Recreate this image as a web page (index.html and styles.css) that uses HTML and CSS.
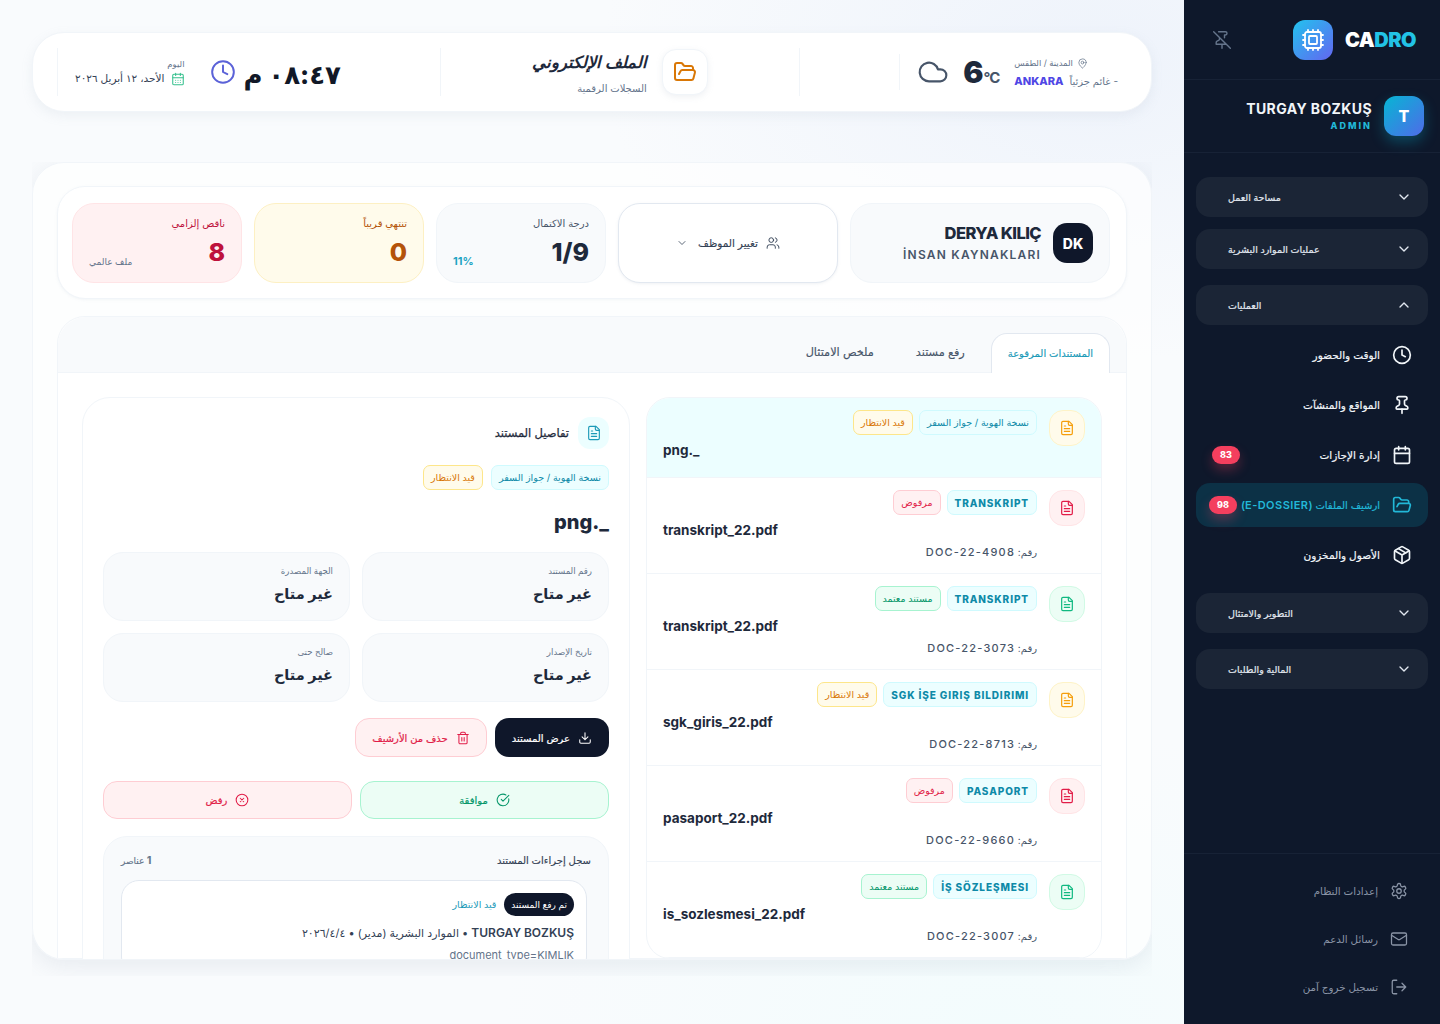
FILE: index.html
```html
<!DOCTYPE html>
<html lang="ar" dir="rtl">
<head>
  <meta charset="utf-8">
  <title>CADRO</title>
  <link rel="stylesheet" href="styles.css">
</head>
<body>
  <svg class="sprite" xmlns="http://www.w3.org/2000/svg">
    <symbol id="i-clock" viewBox="0 0 24 24"><circle cx="12" cy="12" r="10"/><path d="M12 6v6l4 2"/></symbol>
    <symbol id="i-folder" viewBox="0 0 24 24"><path d="m6 14 1.5-2.9A2 2 0 0 1 9.24 10H20a2 2 0 0 1 1.94 2.5l-1.54 6a2 2 0 0 1-1.95 1.5H4a2 2 0 0 1-2-2V5a2 2 0 0 1 2-2h3.9a2 2 0 0 1 1.69.9l.81 1.2a2 2 0 0 0 1.67.9H18a2 2 0 0 1 2 2v2"/></symbol>
    <symbol id="i-cloud" viewBox="0 0 24 24"><path d="M17.5 19H9a7 7 0 1 1 6.71-9h1.79a4.5 4.5 0 1 1 0 9Z"/></symbol>
    <symbol id="i-pinmap" viewBox="0 0 24 24"><path d="M20 10c0 6-8 12-8 12s-8-6-8-12a8 8 0 0 1 16 0Z"/><circle cx="12" cy="10" r="3"/></symbol>
    <symbol id="i-caldays" viewBox="0 0 24 24"><rect x="3" y="4" width="18" height="18" rx="2"/><path d="M16 2v4M8 2v4M3 10h18M8 14h.01M12 14h.01M16 14h.01M8 18h.01M12 18h.01M16 18h.01"/></symbol>
    <symbol id="i-cal" viewBox="0 0 24 24"><rect x="3" y="4" width="18" height="18" rx="2"/><path d="M16 2v4M8 2v4M3 10h18"/></symbol>
    <symbol id="i-pinoff" viewBox="0 0 24 24"><path d="M12 17v5M15 9.34V6h1a2 2 0 0 0 0-4H7.89M2 2l20 20M9 9v1.76a2 2 0 0 1-1.11 1.79l-1.78.9A2 2 0 0 0 5 15.24V17h12"/></symbol>
    <symbol id="i-pin" viewBox="0 0 24 24"><path d="M12 17v5"/><path d="M9 10.76a2 2 0 0 1-1.11 1.79l-1.78.9A2 2 0 0 0 5 15.24V16a1 1 0 0 0 1 1h12a1 1 0 0 0 1-1v-.76a2 2 0 0 0-1.11-1.79l-1.78-.9A2 2 0 0 1 15 10.76V7a1 1 0 0 1 1-1 2 2 0 0 0 0-4H8a2 2 0 0 0 0 4 1 1 0 0 1 1 1z"/></symbol>
    <symbol id="i-cpu" viewBox="0 0 24 24"><rect x="4" y="4" width="16" height="16" rx="2"/><rect x="8" y="8" width="8" height="8" rx="1"/><path d="M12 20v2M12 2v2M17 20v2M17 2v2M2 12h2M2 17h2M2 7h2M20 12h2M20 17h2M20 7h2M7 20v2M7 2v2"/></symbol>
    <symbol id="i-down" viewBox="0 0 24 24"><path d="m6 9 6 6 6-6"/></symbol>
    <symbol id="i-up" viewBox="0 0 24 24"><path d="m18 15-6-6-6 6"/></symbol>
    <symbol id="i-box" viewBox="0 0 24 24"><path d="m7.5 4.27 9 5.15"/><path d="M21 8a2 2 0 0 0-1-1.73l-7-4a2 2 0 0 0-2 0l-7 4A2 2 0 0 0 3 8v8a2 2 0 0 0 1 1.73l7 4a2 2 0 0 0 2 0l7-4A2 2 0 0 0 21 16Z"/><path d="m3.3 7 8.7 5 8.7-5M12 22V12"/></symbol>
    <symbol id="i-gear" viewBox="0 0 24 24"><path d="M12.22 2h-.44a2 2 0 0 0-2 2v.18a2 2 0 0 1-1 1.73l-.43.25a2 2 0 0 1-2 0l-.15-.08a2 2 0 0 0-2.73.73l-.22.38a2 2 0 0 0 .73 2.73l.15.1a2 2 0 0 1 1 1.72v.51a2 2 0 0 1-1 1.74l-.15.09a2 2 0 0 0-.73 2.73l.22.38a2 2 0 0 0 2.73.73l.15-.08a2 2 0 0 1 2 0l.43.25a2 2 0 0 1 1 1.73V20a2 2 0 0 0 2 2h.44a2 2 0 0 0 2-2v-.18a2 2 0 0 1 1-1.73l.43-.25a2 2 0 0 1 2 0l.15.08a2 2 0 0 0 2.73-.73l.22-.39a2 2 0 0 0-.73-2.73l-.15-.08a2 2 0 0 1-1-1.74v-.5a2 2 0 0 1 1-1.74l.15-.09a2 2 0 0 0 .73-2.73l-.22-.38a2 2 0 0 0-2.73-.73l-.15.08a2 2 0 0 1-2 0l-.43-.25a2 2 0 0 1-1-1.73V4a2 2 0 0 0-2-2z"/><circle cx="12" cy="12" r="3"/></symbol>
    <symbol id="i-mail" viewBox="0 0 24 24"><rect x="2" y="4" width="20" height="16" rx="2"/><path d="m22 7-8.97 5.7a1.94 1.94 0 0 1-2.06 0L2 7"/></symbol>
    <symbol id="i-logout" viewBox="0 0 24 24"><path d="M9 21H5a2 2 0 0 1-2-2V5a2 2 0 0 1 2-2h4M16 17l5-5-5-5M21 12H9"/></symbol>
    <symbol id="i-file" viewBox="0 0 24 24"><path d="M15 2H6a2 2 0 0 0-2 2v16a2 2 0 0 0 2 2h12a2 2 0 0 0 2-2V7Z"/><path d="M14 2v4a2 2 0 0 0 2 2h4M10 9H8M16 13H8M16 17H8"/></symbol>
    <symbol id="i-users" viewBox="0 0 24 24"><path d="M16 21v-2a4 4 0 0 0-4-4H6a4 4 0 0 0-4 4v2"/><circle cx="9" cy="7" r="4"/><path d="M22 21v-2a4 4 0 0 0-3-3.87M16 3.13a4 4 0 0 1 0 7.75"/></symbol>
    <symbol id="i-download" viewBox="0 0 24 24"><path d="M21 15v4a2 2 0 0 1-2 2H5a2 2 0 0 1-2-2v-4M7 10l5 5 5-5M12 15V3"/></symbol>
    <symbol id="i-trash" viewBox="0 0 24 24"><path d="M3 6h18M19 6v14c0 1-1 2-2 2H7c-1 0-2-1-2-2V6M8 6V4c0-1 1-2 2-2h4c1 0 2 1 2 2v2M10 11v6M14 11v6"/></symbol>
    <symbol id="i-check" viewBox="0 0 24 24"><path d="M21.801 10A10 10 0 1 1 17 3.335"/><path d="m9 11 3 3L22 4"/></symbol>
    <symbol id="i-cross" viewBox="0 0 24 24"><circle cx="12" cy="12" r="10"/><path d="m15 9-6 6M9 9l6 6"/></symbol>
  </svg>

  <aside class="sidebar">
    <div class="side-head">
      <div class="logo">
        <span class="logo-icon"><svg class="ic"><use href="#i-cpu"/></svg></span>
        <span class="logo-text">CA<b>DRO</b></span>
      </div>
      <svg class="ic pin-off"><use href="#i-pinoff"/></svg>
    </div>
    <div class="side-user">
      <span class="user-avatar">T</span>
      <div class="user-meta">
        <div class="user-name">TURGAY BOZKUŞ</div>
        <div class="user-role">ADMIN</div>
      </div>
    </div>

    <nav class="side-nav">
      <div class="nav-group"><span>مساحة العمل</span><svg class="ic"><use href="#i-down"/></svg></div>
      <div class="nav-group nav-group-close"><span>عمليات الموارد البشرية</span><svg class="ic"><use href="#i-down"/></svg></div>
      <div class="nav-group"><span>العمليات</span><svg class="ic"><use href="#i-up"/></svg></div>
      <div class="nav-items">
        <a class="nav-item"><svg class="ic"><use href="#i-clock"/></svg><span>الوقت والحضور</span></a>
        <a class="nav-item"><svg class="ic"><use href="#i-pin"/></svg><span>المواقع والمنشآت</span></a>
        <a class="nav-item"><svg class="ic"><use href="#i-cal"/></svg><span>إدارة الإجازات</span><em class="count">83</em></a>
        <a class="nav-item active"><svg class="ic"><use href="#i-folder"/></svg><span>ارشيف الملفات <i class="latin">(E-DOSSIER)</i></span><em class="count">98</em></a>
        <a class="nav-item"><svg class="ic"><use href="#i-box"/></svg><span>الأصول والمخزون</span></a>
      </div>
      <div class="nav-group"><span>التطوير والامتثال</span><svg class="ic"><use href="#i-down"/></svg></div>
      <div class="nav-group"><span>المالية والطلبات</span><svg class="ic"><use href="#i-down"/></svg></div>
    </nav>

    <div class="side-foot">
      <a class="foot-item"><svg class="ic"><use href="#i-gear"/></svg>إعدادات النظام</a>
      <a class="foot-item"><svg class="ic"><use href="#i-mail"/></svg>رسائل الدعم</a>
      <a class="foot-item"><svg class="ic"><use href="#i-logout"/></svg>تسجيل خروج آمن</a>
    </div>
  </aside>

  <main class="main">
    <header class="topbar">
      <div class="top-cell">
        <div class="weather">
          <div class="weather-text">
            <div class="weather-label"><svg class="ic"><use href="#i-pinmap"/></svg>المدينة / الطقس</div>
            <div class="weather-line"><span>- غائم جزئياً</span><strong>ANKARA</strong></div>
          </div>
          <div class="temp">6<small>°C</small></div>
          <svg class="ic cloud"><use href="#i-cloud"/></svg>
        </div>
      </div>
      <div class="top-cell top-center">
        <span class="folder-box"><svg class="ic"><use href="#i-folder"/></svg></span>
        <div>
          <h1 class="page-title">الملف الإلكتروني</h1>
          <p class="page-sub">السجلات الرقمية</p>
        </div>
      </div>
      <div class="top-cell top-end">
        <div class="clock">
          <div class="date">
            <div class="date-label">اليوم</div>
            <div class="date-line"><svg class="ic"><use href="#i-caldays"/></svg>الأحد، ١٢ أبريل ٢٠٢٦</div>
          </div>
          <svg class="ic clock-ic"><use href="#i-clock"/></svg>
          <div class="time">٠٨:٤٧ م</div>
        </div>
      </div>
    </header>

    <div class="panel-clip">
    <section class="panel">
      <div class="summary">
        <div class="person">
          <span class="person-avatar">DK</span>
          <div>
            <div class="person-name">DERYA KILIÇ</div>
            <div class="person-dept">İNSAN KAYNAKLARI</div>
          </div>
        </div>
        <div class="switcher">
          <svg class="ic"><use href="#i-users"/></svg>
          <span>تغيير الموظف</span>
          <svg class="ic"><use href="#i-down"/></svg>
        </div>
        <div class="stat">
          <div class="stat-label">درجة الاكتمال</div>
          <div class="stat-row"><span class="stat-num">1/9</span><span class="stat-pct">11%</span></div>
        </div>
        <div class="stat stat-warn">
          <div class="stat-label">تنتهي قريباً</div>
          <div class="stat-row"><span class="stat-num">0</span></div>
        </div>
        <div class="stat stat-bad">
          <div class="stat-label">ناقص إلزامي</div>
          <div class="stat-row"><span class="stat-num">8</span><span class="stat-note">ملف عالمي</span></div>
        </div>
      </div>

      <div class="workspace">
        <div class="tabs">
          <span class="tab active">المستندات المرفوعة</span>
          <span class="tab">رفع مستند</span>
          <span class="tab">ملخص الامتثال</span>
        </div>
        <div class="columns">
          <div class="doc-list">
            <article class="doc selected">
              <span class="doc-icon amber"><svg class="ic"><use href="#i-file"/></svg></span>
              <div class="doc-body">
                <div class="tags"><span class="tag tag-type ar">نسخة الهوية / جواز السفر</span><span class="tag tag-wait">قيد الانتظار</span></div>
                <div class="doc-name">png._</div>
              </div>
            </article>
            <article class="doc">
              <span class="doc-icon red"><svg class="ic"><use href="#i-file"/></svg></span>
              <div class="doc-body">
                <div class="tags"><span class="tag tag-type">TRANSKRIPT</span><span class="tag tag-bad">مرفوض</span></div>
                <div class="doc-name">transkript_22.pdf</div>
                <div class="doc-id">رقم: <span>DOC-22-4908</span></div>
              </div>
            </article>
            <article class="doc">
              <span class="doc-icon green"><svg class="ic"><use href="#i-file"/></svg></span>
              <div class="doc-body">
                <div class="tags"><span class="tag tag-type">TRANSKRIPT</span><span class="tag tag-ok">مستند معتمد</span></div>
                <div class="doc-name">transkript_22.pdf</div>
                <div class="doc-id">رقم: <span>DOC-22-3073</span></div>
              </div>
            </article>
            <article class="doc">
              <span class="doc-icon amber"><svg class="ic"><use href="#i-file"/></svg></span>
              <div class="doc-body">
                <div class="tags"><span class="tag tag-type">SGK İŞE GIRIŞ BILDIRIMI</span><span class="tag tag-wait">قيد الانتظار</span></div>
                <div class="doc-name">sgk_giris_22.pdf</div>
                <div class="doc-id">رقم: <span>DOC-22-8713</span></div>
              </div>
            </article>
            <article class="doc">
              <span class="doc-icon red"><svg class="ic"><use href="#i-file"/></svg></span>
              <div class="doc-body">
                <div class="tags"><span class="tag tag-type">PASAPORT</span><span class="tag tag-bad">مرفوض</span></div>
                <div class="doc-name">pasaport_22.pdf</div>
                <div class="doc-id">رقم: <span>DOC-22-9660</span></div>
              </div>
            </article>
            <article class="doc">
              <span class="doc-icon green"><svg class="ic"><use href="#i-file"/></svg></span>
              <div class="doc-body">
                <div class="tags"><span class="tag tag-type">İŞ SÖZLEŞMESI</span><span class="tag tag-ok">مستند معتمد</span></div>
                <div class="doc-name">is_sozlesmesi_22.pdf</div>
                <div class="doc-id">رقم: <span>DOC-22-3007</span></div>
              </div>
            </article>
          </div>

          <div class="details">
            <div class="details-head">
              <span class="details-icon"><svg class="ic"><use href="#i-file"/></svg></span>
              <h2>تفاصيل المستند</h2>
            </div>
            <div class="tags"><span class="tag tag-type ar">نسخة الهوية / جواز السفر</span><span class="tag tag-wait">قيد الانتظار</span></div>
            <div class="details-name">png._</div>
            <div class="facts">
              <div class="fact"><label>رقم المستند</label><strong>غير متاح</strong></div>
              <div class="fact"><label>الجهة المصدرة</label><strong>غير متاح</strong></div>
              <div class="fact"><label>تاريخ الإصدار</label><strong>غير متاح</strong></div>
              <div class="fact"><label>صالح حتى</label><strong>غير متاح</strong></div>
            </div>
            <div class="actions">
              <button class="btn btn-dark"><svg class="ic"><use href="#i-download"/></svg>عرض المستند</button>
              <button class="btn btn-del"><svg class="ic"><use href="#i-trash"/></svg>حذف من الأرشيف</button>
            </div>
            <div class="decide">
              <button class="btn btn-ok"><svg class="ic"><use href="#i-check"/></svg>موافقة</button>
              <button class="btn btn-no"><svg class="ic"><use href="#i-cross"/></svg>رفض</button>
            </div>
            <div class="log">
              <div class="log-head"><span>سجل إجراءات المستند</span><small><b>1</b> عناصر</small></div>
              <div class="log-card">
                <div class="log-tags"><span class="log-pill">تم رفع المستند</span><span class="log-state">قيد الانتظار</span></div>
                <div class="log-who"><b>TURGAY BOZKUŞ</b> • الموارد البشرية (مدير) • ٢٠٢٦/٤/٤</div>
                <div class="log-data">document_type=KIMLIK</div>
              </div>
            </div>
          </div>
        </div>
      </div>
    </section>
    </div>
  </main>
</body>
</html>
```

FILE: styles.css
```css
* {
  box-sizing: border-box;
}

html, body {
  height: 100%;
}

body {
  display: flex;
  margin: 0;
  overflow: hidden;
  background:
    radial-gradient(500px 300px at 1000px 1024px, #f3fcfd 0%, rgba(243, 252, 253, 0) 100%),
    radial-gradient(500px 300px at 1100px 60px, #eef3fb 0%, rgba(238, 243, 251, 0) 100%),
    #f9fbfd;
  color: #1e293b;
  font-family: Inter, "DejaVu Sans", sans-serif;
}

h1, h2, p {
  margin: 0;
}

.sprite {
  display: none;
}

.ic {
  width: 20px;
  height: 20px;
  flex: none;
  fill: none;
  stroke: currentColor;
  stroke-width: 2;
  stroke-linecap: round;
  stroke-linejoin: round;
}

/* sidebar */
.sidebar {
  display: flex;
  flex-direction: column;
  flex: none;
  width: 256px;
  background: #0e182b;
  color: #e2e8f0;
}

.side-head {
  display: flex;
  align-items: center;
  justify-content: space-between;
  height: 80px;
  padding: 0 24px 0 28px;
  border-bottom: 1px solid #172236;
}

.logo {
  display: flex;
  align-items: center;
  gap: 12px;
  direction: ltr;
}

.logo-icon {
  display: flex;
  align-items: center;
  justify-content: center;
  width: 40px;
  height: 40px;
  border-radius: 12px;
  background: linear-gradient(135deg, #22c3ee, #6366f1);
  color: #fff;
}

.logo-icon .ic {
  width: 24px;
  height: 24px;
  stroke-width: 1.8;
}

.logo-text {
  color: #fff;
  font-size: 20px;
  font-weight: 900;
  letter-spacing: -0.5px;
}

.logo-text b {
  color: #22c3e6;
  font-weight: 900;
}

.pin-off {
  color: #64748b;
  stroke-width: 1.7;
}

.side-user {
  display: flex;
  align-items: center;
  gap: 12px;
  height: 73px;
  padding: 0 16px;
  border-bottom: 1px solid #172236;
}

.user-avatar {
  display: flex;
  align-items: center;
  justify-content: center;
  width: 40px;
  height: 40px;
  border-radius: 12px;
  background: linear-gradient(135deg, #06b6d4, #4f6be8);
  box-shadow: 0 6px 14px rgba(6, 182, 212, 0.3);
  color: #fff;
  font-size: 16px;
  font-weight: 800;
}

.user-name {
  color: #f1f5f9;
  font-size: 14px;
  font-weight: 700;
  letter-spacing: 0.4px;
  line-height: 18px;
}

.user-role {
  margin-top: 2px;
  color: #22b8d8;
  font-size: 9px;
  font-weight: 800;
  letter-spacing: 2px;
  line-height: 12px;
}

.side-nav {
  display: flex;
  flex-direction: column;
  flex: 1;
  gap: 16px;
  padding: 24px 12px 0;
}

.nav-group {
  display: flex;
  flex-direction: row-reverse;
  align-items: center;
  justify-content: space-between;
  height: 40px;
  padding: 0 16px 0 32px;
  border-radius: 14px;
  background: #1b2536;
  color: #e2e8f0;
  font-size: 9.5px;
  -webkit-text-stroke: 0.2px;
}

.nav-group .ic {
  width: 16px;
  height: 16px;
}

.nav-group-close {
  margin-top: -4px;
}

.nav-items {
  display: flex;
  flex-direction: column;
  gap: 6px;
  margin: -8px 0 0;
}

.nav-item {
  display: flex;
  align-items: center;
  gap: 12px;
  height: 44px;
  padding: 0 16px;
  border-radius: 14px;
  color: #f1f5f9;
  font-size: 10.5px;
  white-space: nowrap;
  -webkit-text-stroke: 0.2px;
}

.nav-item .ic {
  width: 20px;
  height: 20px;
}

.nav-item.active {
  background: #0c3146;
  color: #22b8d8;
  font-size: 10px;
}

.latin {
  font-size: 11px;
  font-style: normal;
  font-weight: 600;
  letter-spacing: 0.45px;
  -webkit-text-stroke: 0;
}

.count {
  margin-right: auto;
  padding: 0 8px;
  border-radius: 9px;
  background: #f43f5e;
  box-shadow: 0 6px 12px rgba(244, 63, 94, 0.3);
  color: #fff;
  font-size: 9px;
  font-style: normal;
  font-weight: 800;
  line-height: 18px;
  -webkit-text-stroke: 0;
}

.nav-item.active .count {
  margin-right: -8px;
}

.side-foot {
  display: flex;
  flex-direction: column;
  gap: 8px;
  height: 171px;
  padding: 17px 12px;
  border-top: 1px solid #172236;
}

.foot-item {
  display: flex;
  align-items: center;
  gap: 12px;
  height: 40px;
  padding: 0 20px;
  color: #8a94a6;
  font-size: 10.3px;
}

.foot-item .ic {
  width: 18px;
  height: 18px;
  stroke-width: 1.7;
}

/* main column */
.main {
  display: flex;
  flex: 1;
  flex-direction: column;
  gap: 50px;
  min-width: 0;
  padding: 32px 32px 48px;
}

.topbar {
  display: grid;
  flex: none;
  grid-template-columns: 327px 360px 1fr;
  align-items: center;
  height: 80px;
  padding: 0 24px;
  border: 1px solid #f1f5f9;
  border-radius: 32px;
  background: #fff;
  box-shadow: 0 4px 12px rgba(148, 163, 184, 0.12);
}

.top-cell {
  display: flex;
  align-items: center;
  height: 48px;
}

.weather {
  display: flex;
  align-items: center;
  gap: 15px;
  height: 36px;
  margin-right: 9px;
  padding-left: 17px;
  border-left: 1px solid #f1f5f9;
}

.weather-label {
  display: flex;
  align-items: center;
  justify-content: flex-end;
  gap: 4px;
  color: #64748b;
  font-size: 8.5px;
  line-height: 14px;
}

.weather-label .ic {
  width: 11px;
  height: 11px;
  stroke-width: 1.6;
}

.weather-line {
  display: flex;
  align-items: center;
  gap: 6px;
  margin-top: 4px;
  color: #64748b;
  font-size: 10px;
}

.weather-line strong {
  color: #4f46e5;
  font-size: 11px;
  font-weight: 800;
}

.temp {
  direction: ltr;
  margin-left: -1px;
  color: #1e293b;
  font-size: 30px;
  font-weight: 900;
  line-height: 1;
}

.temp small {
  color: #475569;
  font-size: 15px;
  font-weight: 700;
  letter-spacing: -1px;
}

.cloud {
  width: 32px;
  height: 32px;
  color: #475569;
  stroke-width: 1.6;
}

.top-center {
  justify-content: center;
  gap: 15px;
  border-right: 1px solid #f1f5f9;
  border-left: 1px solid #f1f5f9;
}

.folder-box {
  display: flex;
  align-items: center;
  justify-content: center;
  width: 46px;
  height: 46px;
  border: 1px solid #f1f5f9;
  border-radius: 14px;
  background: #fff;
  box-shadow: 0 2px 6px rgba(148, 163, 184, 0.15);
  color: #d97706;
}

.folder-box .ic {
  width: 24px;
  height: 24px;
}

.page-title {
  color: #1e293b;
  font-size: 16.5px;
  font-weight: 800;
  font-style: italic;
  line-height: 24px;
}

.page-sub {
  margin-top: 7px;
  color: #64748b;
  font-size: 10px;
  line-height: 14px;
}

.top-end {
  justify-content: flex-end;
}

.clock {
  display: flex;
  align-items: center;
  height: 48px;
  margin-right: auto;
  padding-left: 17px;
  border-left: 1px solid #f1f5f9;
}

.clock .date {
  order: 3;
}

.clock-ic {
  order: 2;
  width: 26px;
  height: 26px;
  margin: 0 8px 0 7px;
  color: #5b62d8;
  stroke-width: 1.8;
}

.time {
  order: 1;
  margin-top: 4px;
  color: #111827;
  font-size: 26px;
  font-weight: 800;
}

.date {
  margin-right: 18px;
}

.date-label {
  color: #64748b;
  font-size: 8.5px;
}

.date-line {
  display: flex;
  align-items: center;
  gap: 6px;
  margin-top: 3px;
  color: #334155;
  font-size: 10.5px;
}

.date-line .ic {
  width: 14px;
  height: 14px;
  color: #34c08d;
  stroke-width: 1.8;
}

/* the panel's shadow stops at the edge of this box, as in a scroller */
.panel-clip {
  display: flex;
  flex: 1;
  min-height: 0;
  overflow: hidden;
  padding-bottom: 16px;
}

.panel {
  display: flex;
  flex: 1;
  flex-direction: column;
  gap: 17px;
  min-width: 0;
  overflow: hidden;
  padding: 23px 24px 0;
  border: 1px solid #f1f5f9;
  border-radius: 32px;
  background: rgba(255, 255, 255, 0.65);
  box-shadow: 0 6px 24px rgba(100, 116, 139, 0.12);
}

/* employee summary */
.summary {
  display: grid;
  flex: none;
  grid-template-columns: 260px 220px 170px 170px 170px;
  gap: 12px;
  height: 113px;
  padding: 16px 16px 15px;
  border: 1px solid #f1f5f9;
  border-radius: 28px;
  background: #fff;
  box-shadow: 0 1px 3px rgba(148, 163, 184, 0.1);
}

.person {
  display: flex;
  align-items: center;
  gap: 12px;
  padding: 0 16px;
  border: 1px solid #f1f5f9;
  border-radius: 22px;
  background: #f8fafc;
}

.person-avatar {
  display: flex;
  align-items: center;
  justify-content: center;
  width: 40px;
  height: 40px;
  border-radius: 14px;
  background: #0f172a;
  color: #fff;
  font-size: 14px;
  font-weight: 800;
}

.person-name {
  color: #1e293b;
  font-size: 16.5px;
  font-weight: 800;
  letter-spacing: -0.6px;
  line-height: 20px;
}

.person-dept {
  margin-top: 4px;
  color: #475569;
  font-size: 12px;
  font-weight: 600;
  letter-spacing: 1.2px;
  line-height: 16px;
}

.switcher {
  display: flex;
  align-items: center;
  justify-content: center;
  gap: 8px;
  border: 1px solid #e2e8f0;
  border-radius: 22px;
  background: #fff;
  box-shadow: 0 1px 3px rgba(148, 163, 184, 0.15);
  color: #334155;
  font-size: 10.5px;
  -webkit-text-stroke: 0.15px;
}

.switcher .ic {
  width: 14px;
  height: 14px;
  stroke-width: 1.6;
}

.switcher .ic:last-child {
  width: 12px;
  height: 12px;
  margin-right: 2px;
}

.stat {
  display: flex;
  flex-direction: column;
  justify-content: space-between;
  padding: 13px 16px 16px;
  border: 1px solid #f1f5f9;
  border-radius: 22px;
  background: #f8fafc;
}

.stat-label {
  color: #475569;
  font-size: 10px;
}

.stat-row {
  display: flex;
  align-items: flex-end;
  justify-content: space-between;
}

.stat-num {
  color: #1e293b;
  font-size: 25px;
  font-weight: 800;
  line-height: 28px;
}

.stat-pct {
  margin-bottom: -2px;
  color: #1fa5c4;
  font-size: 11px;
  font-weight: 700;
}

.stat-note {
  margin-bottom: -1px;
  color: #64748b;
  font-size: 9px;
}

.stat-warn {
  border-color: #fdf0c3;
  background: #fffbeb;
}

.stat-warn .stat-label,
.stat-warn .stat-num {
  color: #b45309;
}

.stat-bad {
  border-color: #ffe4e6;
  background: #fff1f2;
}

.stat-bad .stat-label,
.stat-bad .stat-num {
  color: #be123c;
}

/* tabs + columns */
.workspace {
  flex: 1;
  min-height: 0;
  border: 1px solid #f1f5f9;
  border-radius: 28px 28px 0 0;
  background: #fff;
}

.tabs {
  display: flex;
  align-items: flex-end;
  gap: 10px;
  height: 56px;
  padding: 0 16px;
  border-bottom: 1px solid #f1f5f9;
  border-radius: 28px 28px 0 0;
  background: #f8fafc;
}

.tab {
  padding: 0 16px;
  color: #475569;
  font-size: 11.3px;
  line-height: 39px;
  -webkit-text-stroke: 0.15px;
}

.tab.active {
  margin-bottom: -1px;
  border: 1px solid #e2e8f0;
  border-bottom: 0;
  border-radius: 16px 16px 0 0;
  background: #fff;
  color: #1b9ab8;
  font-size: 10px;
}

.columns {
  display: flex;
  align-items: flex-start;
  gap: 16px;
  padding: 24px 24px 0;
}

.doc-list {
  flex: none;
  width: 456px;
  overflow: hidden;
  border: 1px solid #f1f5f9;
  border-radius: 24px;
  background: #fff;
}

.doc {
  display: flex;
  gap: 12px;
  height: 96px;
  padding: 12px 16px;
  border-bottom: 1px solid #f1f5f9;
}

.doc.selected {
  height: 80px;
  background: #ecfeff;
}

.doc-icon {
  display: flex;
  align-items: center;
  justify-content: center;
  flex: none;
  width: 36px;
  height: 36px;
  border: 1px solid;
  border-radius: 14px;
}

.doc-icon .ic {
  width: 16px;
  height: 16px;
  stroke-width: 1.8;
}

.amber {
  border-color: #fef3c7;
  background: #fffbeb;
  color: #f59e0b;
}

.red {
  border-color: #ffe4e6;
  background: #fff1f2;
  color: #e11d48;
}

.green {
  border-color: #d1fae5;
  background: #ecfdf5;
  color: #10b981;
}

.doc-body {
  flex: 1;
  min-width: 0;
}

.tags {
  display: flex;
  gap: 6px;
}

.tag {
  display: flex;
  align-items: center;
  height: 25px;
  padding: 0 7px;
  border: 1px solid;
  border-radius: 7px;
  font-size: 9.5px;
}

.tag-type {
  border-color: #cffafe;
  background: #ecfeff;
  color: #0e8aa8;
  font-size: 10px;
  font-weight: 800;
  letter-spacing: 0.9px;
}

.tag-type.ar {
  font-size: 9.6px;
  font-weight: 400;
  letter-spacing: 0;
}

.tag-wait {
  border-color: #fde68a;
  background: #fffbeb;
  color: #d97706;
}

.tag-bad {
  border-color: #fecdd3;
  background: #fff1f2;
  color: #e11d48;
}

.tag-ok {
  border-color: #a7f3d0;
  background: #ecfdf5;
  color: #059669;
}

.doc-name {
  margin-top: 6px;
  direction: ltr;
  color: #1e293b;
  font-size: 13.5px;
  font-weight: 700;
  line-height: 18px;
}

.doc-id {
  margin-top: 6px;
  color: #475569;
  font-size: 10px;
  line-height: 14px;
}

.doc-id span {
  font-size: 11px;
  font-weight: 500;
  letter-spacing: 1.2px;
}

.details {
  flex: 1;
  min-width: 0;
  padding: 19px 20px 20px;
  border: 1px solid #f1f5f9;
  border-radius: 28px;
  background: #fff;
}

.details-head {
  display: flex;
  align-items: center;
  gap: 9px;
  margin-bottom: 16px;
}

.details-icon {
  display: flex;
  align-items: center;
  justify-content: center;
  width: 31px;
  height: 32px;
  border-radius: 12px;
  background: #ecfeff;
  color: #1b9ab8;
}

.details-icon .ic {
  width: 16px;
  height: 16px;
  stroke-width: 1.7;
}

.details-head h2 {
  color: #1e293b;
  font-size: 11.5px;
  font-weight: 400;
  -webkit-text-stroke: 0.25px;
}

.details .tags {
  gap: 8px;
}

.details-name {
  margin-top: 18px;
  margin-bottom: 16px;
  color: #1e293b;
  font-size: 20px;
  font-weight: 800;
  line-height: 28px;
  direction: ltr;
  text-align: right;
}

.facts {
  display: grid;
  grid-template-columns: 1fr 1fr;
  gap: 12px;
}

.fact {
  display: flex;
  flex-direction: column;
  gap: 9px;
  height: 69px;
  padding: 13px 16px;
  border: 1px solid #f1f5f9;
  border-radius: 20px;
  background: #f8fafc;
}

.fact label {
  color: #64748b;
  font-size: 8.6px;
}

.fact strong {
  color: #1e293b;
  font-size: 14.5px;
  font-weight: 700;
}

.actions {
  display: flex;
  gap: 8px;
  margin-top: 16px;
}

.btn {
  display: flex;
  align-items: center;
  justify-content: center;
  gap: 8px;
  height: 39px;
  padding: 0 16px;
  border: 1px solid transparent;
  border-radius: 14px;
  font-family: inherit;
  font-size: 10px;
  font-weight: 400;
  -webkit-text-stroke: 0.2px;
}

.btn .ic {
  width: 14px;
  height: 14px;
  stroke-width: 1.8;
}

.btn-dark {
  background: #0f172a;
  color: #fff;
}

.btn-del {
  border-color: #fecdd3;
  background: #fff1f2;
  color: #e11d48;
}

.decide {
  display: grid;
  grid-template-columns: 1fr 1fr;
  gap: 8px;
  margin-top: 24px;
}

.decide .btn {
  height: 38px;
}

.btn-ok {
  border-color: #a7f3d0;
  background: #ecfdf5;
  color: #059669;
}

.btn-no {
  border-color: #fecdd3;
  background: #fff1f2;
  color: #e11d48;
}

.log {
  margin-top: 17px;
  padding: 17px;
  border: 1px solid #f1f5f9;
  border-radius: 24px;
  background: #f8fafc;
}

.log-head {
  display: flex;
  align-items: center;
  justify-content: space-between;
  margin-bottom: 14px;
  color: #334155;
  font-size: 10px;
  -webkit-text-stroke: 0.15px;
}

.log-head small {
  color: #64748b;
  font-size: 9px;
}

.log-head b {
  font-size: 10px;
}

.log-card {
  margin-right: 4px;
  padding: 12px;
  border: 1px solid #e2e8f0;
  border-radius: 18px;
  background: #fff;
}

.log-tags {
  display: flex;
  align-items: center;
  gap: 8px;
}

.log-pill {
  padding: 0 7px;
  border-radius: 12px;
  background: #0f172a;
  color: #fff;
  font-size: 9px;
  line-height: 23px;
}

.log-state {
  color: #1b9ab8;
  font-size: 9.5px;
}

.log-who {
  margin-top: 8px;
  color: #334155;
  font-size: 11px;
  line-height: 18px;
}

.log-who b {
  font-size: 12px;
  font-weight: 600;
}

.log-data {
  margin-top: 6px;
  color: #64748b;
  font-size: 11px;
  line-height: 14px;
}
```
